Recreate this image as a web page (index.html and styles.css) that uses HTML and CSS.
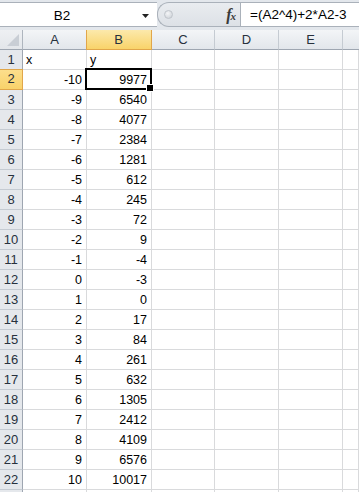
FILE: index.html
```html
<!DOCTYPE html>
<html>
<head>
<meta charset="utf-8">
<link rel="stylesheet" href="styles.css">
</head>
<body>
<div class="topbar">
  <div class="namebox">
    <span class="namebox-text">B2</span>
    <svg class="dd" width="7" height="4" viewBox="0 0 7 4"><path d="M0 0H7L3.5 4Z" fill="#222"/></svg>
  </div>
  <div class="pill">
    <span class="knob"></span>
    <span class="fx"><i>f</i><i class="fx-x">x</i></span>
  </div>
  <div class="formula">=(A2^4)+2*A2-3</div>
</div>
<div class="gap"></div>
<div class="sheet" id="sheet">
  <div class="corner"><svg width="12" height="12" viewBox="0 0 12 12"><path d="M12 0V12H0Z" fill="#c9ced5"/></svg></div>
  <div class="ch">A</div>
  <div class="ch ch-sel">B</div>
  <div class="ch">C</div>
  <div class="ch">D</div>
  <div class="ch">E</div>
  <div class="ch ch-last"></div>

  <div class="rh">1</div><div class="c l">x</div><div class="c l">y</div><div class="c"></div><div class="c"></div><div class="c"></div><div class="c"></div>
  <div class="rh rh-sel">2</div><div class="c">-10</div><div class="c sel">9977</div><div class="c"></div><div class="c"></div><div class="c"></div><div class="c"></div>
  <div class="rh">3</div><div class="c">-9</div><div class="c">6540</div><div class="c"></div><div class="c"></div><div class="c"></div><div class="c"></div>
  <div class="rh">4</div><div class="c">-8</div><div class="c">4077</div><div class="c"></div><div class="c"></div><div class="c"></div><div class="c"></div>
  <div class="rh">5</div><div class="c">-7</div><div class="c">2384</div><div class="c"></div><div class="c"></div><div class="c"></div><div class="c"></div>
  <div class="rh">6</div><div class="c">-6</div><div class="c">1281</div><div class="c"></div><div class="c"></div><div class="c"></div><div class="c"></div>
  <div class="rh">7</div><div class="c">-5</div><div class="c">612</div><div class="c"></div><div class="c"></div><div class="c"></div><div class="c"></div>
  <div class="rh">8</div><div class="c">-4</div><div class="c">245</div><div class="c"></div><div class="c"></div><div class="c"></div><div class="c"></div>
  <div class="rh">9</div><div class="c">-3</div><div class="c">72</div><div class="c"></div><div class="c"></div><div class="c"></div><div class="c"></div>
  <div class="rh">10</div><div class="c">-2</div><div class="c">9</div><div class="c"></div><div class="c"></div><div class="c"></div><div class="c"></div>
  <div class="rh">11</div><div class="c">-1</div><div class="c">-4</div><div class="c"></div><div class="c"></div><div class="c"></div><div class="c"></div>
  <div class="rh">12</div><div class="c">0</div><div class="c">-3</div><div class="c"></div><div class="c"></div><div class="c"></div><div class="c"></div>
  <div class="rh">13</div><div class="c">1</div><div class="c">0</div><div class="c"></div><div class="c"></div><div class="c"></div><div class="c"></div>
  <div class="rh">14</div><div class="c">2</div><div class="c">17</div><div class="c"></div><div class="c"></div><div class="c"></div><div class="c"></div>
  <div class="rh">15</div><div class="c">3</div><div class="c">84</div><div class="c"></div><div class="c"></div><div class="c"></div><div class="c"></div>
  <div class="rh">16</div><div class="c">4</div><div class="c">261</div><div class="c"></div><div class="c"></div><div class="c"></div><div class="c"></div>
  <div class="rh">17</div><div class="c">5</div><div class="c">632</div><div class="c"></div><div class="c"></div><div class="c"></div><div class="c"></div>
  <div class="rh">18</div><div class="c">6</div><div class="c">1305</div><div class="c"></div><div class="c"></div><div class="c"></div><div class="c"></div>
  <div class="rh">19</div><div class="c">7</div><div class="c">2412</div><div class="c"></div><div class="c"></div><div class="c"></div><div class="c"></div>
  <div class="rh">20</div><div class="c">8</div><div class="c">4109</div><div class="c"></div><div class="c"></div><div class="c"></div><div class="c"></div>
  <div class="rh">21</div><div class="c">9</div><div class="c">6576</div><div class="c"></div><div class="c"></div><div class="c"></div><div class="c"></div>
  <div class="rh">22</div><div class="c">10</div><div class="c">10017</div><div class="c"></div><div class="c"></div><div class="c"></div><div class="c"></div>
  <div class="rh"></div><div class="c"></div><div class="c"></div><div class="c"></div><div class="c"></div><div class="c"></div><div class="c"></div>
</div>
</body>
</html>
```
FILE: styles.css
```css
* { box-sizing: border-box; }
html, body { margin: 0; padding: 0; }
body {
  width: 359px;
  height: 492px;
  overflow: hidden;
  background: #fff;
  font-family: "Liberation Sans", Arial, sans-serif;
  font-size: 12.5px;
  color: #000;
}
.topbar {
  display: flex;
  height: 27px;
  padding-top: 2px;
  background: #e3e7ec;
}
.namebox {
  width: 157px;
  height: 25px;
  background: #fff;
  border-top: 1px solid #aab1ba;
  border-bottom: 1px solid #aab1ba;
  display: flex;
  align-items: center;
  position: relative;
}
.namebox-text {
  flex: 1;
  text-align: center;
  font-size: 13.5px;
  padding-right: 18px;
  padding-top: 1px;
}
.dd { margin-right: 8px; margin-top: 2px; }
.pill {
  width: 83px;
  height: 25px;
  background: linear-gradient(#e9ecf0, #dde1e6);
  border-top: 1px solid #aab1ba;
  border-bottom: 1px solid #aab1ba;
  border-left: 1px solid #aab1ba;
  border-radius: 12px 0 0 12px;
  display: flex;
  align-items: center;
  justify-content: space-between;
  padding: 0 5px 0 6px;
}
.knob {
  width: 9px;
  height: 9px;
  border-radius: 50%;
  background: radial-gradient(circle at 40% 35%, #f4f5f7, #c9ced4);
  border: 1px solid #c0c5cb;
}
.fx {
  font-family: "Liberation Serif", "Times New Roman", serif;
  font-size: 16px;
  font-weight: bold;
  color: #3a3a3a;
  letter-spacing: -1px;
  padding-top: 1px;
}
.fx-x { font-size: 11px; font-weight: bold; }
.formula {
  flex: 1;
  height: 25px;
  background: #fff;
  border-top: 1px solid #aab1ba;
  border-bottom: 1px solid #aab1ba;
  border-left: 1px solid #aab1ba;
  padding-left: 9px;
  font-size: 13.5px;
  line-height: 23px;
}
.gap {
  height: 3px;
  background: #e3e7ec;
}
.sheet {
  display: grid;
  grid-template-columns: 23px 64px 65px 63px 64px 64px 1fr;
  grid-auto-rows: 20px;
}
.corner {
  background: linear-gradient(#eef0f3, #e3e6ea);
  border-right: 1px solid #aeb5be;
  border-bottom: 1px solid #9ea6b1;
  display: flex;
  align-items: flex-end;
  justify-content: flex-end;
  padding: 0 3px 3px 0;
}
.ch {
  background: linear-gradient(#f3f5f7, #e2e6eb);
  border-right: 1px solid #c5cbd2;
  border-bottom: 1px solid #9ea6b1;
  text-align: center;
  line-height: 20px;
  font-size: 13px;
  color: #27313d;
}
.ch-last { border-right: none; }
.ch-sel {
  background: linear-gradient(#fce9ab, #f9d36a);
  border-right: 1px solid #e1a64a;
  border-bottom: 1px solid #e1a64a;
  box-shadow: inset 1px 0 0 #e1a64a;
  margin-left: -1px;
}
.rh {
  background: #e5e8ec;
  border-right: 1px solid #9ea6b1;
  border-bottom: 1px solid #c5cbd2;
  text-align: center;
  line-height: 20px;
  font-size: 13px;
  color: #27313d;
}
.rh-sel {
  background: linear-gradient(#fcdf8e, #f9d26a);
  border-bottom: 1px solid #e1a64a;
  border-right: 1px solid #e1a64a;
  box-shadow: inset 0 1px 0 #e1a64a;
  margin-top: -1px;
}
.c {
  border-right: 1px solid #d9dadc;
  border-bottom: 1px solid #d9dadc;
  text-align: right;
  padding: 0 4px 0 3px;
  line-height: 21px;
  white-space: nowrap;
}
.c.l { text-align: left; }
.sel { position: relative; }
.sel::after {
  content: "";
  position: absolute;
  left: -2px;
  top: -2px;
  right: -1px;
  bottom: -1px;
  border: 2px solid #000;
}
.sel::before {
  content: "";
  position: absolute;
  right: -3px;
  bottom: -3px;
  width: 6px;
  height: 6px;
  background: #000;
  border: 1px solid #fff;
  z-index: 1;
}
```
